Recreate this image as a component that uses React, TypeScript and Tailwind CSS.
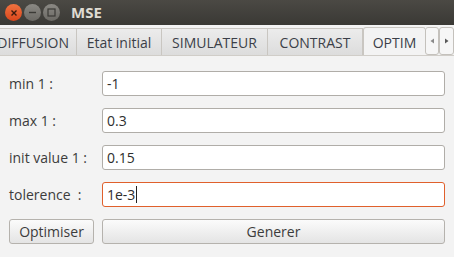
import type { ReactNode } from "react";

const font = { fontFamily: '"Open Sans", "DejaVu Sans", sans-serif' };

const tabs = [
  { label: "Etat initial", width: "w-[85px]" },
  { label: "SIMULATEUR", width: "w-[106px]" },
  { label: "CONTRAST", width: "w-[95px]" },
];

function WindowButton({ children, close }: { children: ReactNode; close?: boolean }) {
  return (
    <div
      className={`flex h-[17px] w-[17px] items-center justify-center rounded-full ${
        close
          ? "bg-gradient-to-b from-[#f0723f] to-[#d9461b] text-[#3a1a0e]"
          : "bg-gradient-to-b from-[#8b8984] to-[#6b6964] text-[#3b3a36]"
      }`}
    >
      {children}
    </div>
  );
}

function Field({ label, value, focused }: { label: string; value: string; focused?: boolean }) {
  return (
    <div className="flex h-[25px] items-center">
      <span className="w-[93px] whitespace-pre text-[14px] text-[#3c3c3c]">{label}</span>
      <div
        className={`flex h-[25px] w-[343px] items-center rounded-[3px] border bg-white px-[4px] text-[14px] text-[#2e2e2e] ${
          focused ? "border-[#e0602c]" : "border-[#b0ada8]"
        }`}
      >
        {value}
        {focused ? <span className="ml-[1px] h-[17px] w-px bg-[#222]" /> : null}
      </div>
    </div>
  );
}

export default function App() {
  return (
    <div className="flex h-[257px] w-[454px] flex-col overflow-hidden bg-[#f3f3f3]" style={font}>
      <div className="flex h-[25px] items-center bg-gradient-to-b from-[#4b4944] to-[#3a3935] pl-[5px]">
        <div className="flex gap-[2px]">
          <WindowButton close>
            <svg width="8" height="8" viewBox="0 0 8 8">
              <path d="M1.5 1.5 6.5 6.5M6.5 1.5 1.5 6.5" stroke="currentColor" strokeWidth="1.4" />
            </svg>
          </WindowButton>
          <WindowButton>
            <svg width="9" height="9" viewBox="0 0 9 9">
              <path d="M1 4.5h7" stroke="currentColor" strokeWidth="1.4" />
            </svg>
          </WindowButton>
          <WindowButton>
            <svg width="9" height="9" viewBox="0 0 9 9">
              <rect x="1" y="1" width="7" height="7" fill="none" stroke="currentColor" strokeWidth="1.2" />
            </svg>
          </WindowButton>
        </div>
        <span className="ml-[11px] text-[15px] font-bold text-[#dfdbd2]">MSE</span>
      </div>

      <div className="flex h-[31px] items-end border-b border-[#d0cdc8] bg-[#f3f3f3]">
        <div className="flex flex-1 items-end overflow-hidden">
          <div className="flex h-[27px] w-[77px] shrink-0 items-center justify-end overflow-hidden whitespace-nowrap border border-b-0 border-l-0 border-[#c9c6c1] bg-gradient-to-b from-[#ececec] to-[#dcdcdc] pr-[7px] text-[14px] text-[#3b3f48]">
            DIFFUSION
          </div>
          {tabs.map((tab) => (
            <div
              key={tab.label}
              className={`flex h-[27px] ${tab.width} shrink-0 items-center justify-center whitespace-nowrap border border-b-0 border-l-0 border-[#c9c6c1] bg-gradient-to-b from-[#ececec] to-[#dcdcdc] text-[14px] text-[#3b3f48]`}
            >
              {tab.label}
            </div>
          ))}
          <div className="-mb-px flex h-[29px] w-[63px] shrink-0 items-center justify-center rounded-t-[3px] border border-b-0 border-[#c9c6c1] bg-[#f3f3f3] text-[14px] text-[#3b3f48]">
            OPTIM
          </div>
        </div>
        <div className="flex h-[28px]">
          <div className="flex w-[14px] items-center justify-center rounded-[3px] border border-[#c4c1bc] bg-[#f6f6f6]">
            <svg width="5" height="6" viewBox="0 0 5 6">
              <path d="M4 0.5 0.5 3 4 5.5Z" fill="#8a8a8a" />
            </svg>
          </div>
          <div className="flex w-[15px] items-center justify-center rounded-[3px] border border-[#c4c1bc] bg-[#f6f6f6]">
            <svg width="5" height="6" viewBox="0 0 5 6">
              <path d="M1 0.5 4.5 3 1 5.5Z" fill="#5a5a5a" />
            </svg>
          </div>
        </div>
      </div>

      <div className="flex flex-col gap-[12px] pl-[9px] pt-[15px]">
        <Field label="min 1 :" value="-1" />
        <Field label="max 1 :" value="0.3" />
        <Field label="init value 1 :" value="0.15" />
        <Field label="tolerence  :" value="1e-3" focused />
        <div className="flex h-[25px] gap-[8px]">
          <button className="w-[85px] rounded-[3px] border border-[#b5b2ad] bg-gradient-to-b from-[#fbfbfb] to-[#e4e4e4] text-[14px] text-[#3c3c3c]">
            Optimiser
          </button>
          <button className="w-[343px] rounded-[3px] border border-[#b5b2ad] bg-gradient-to-b from-[#fbfbfb] to-[#e4e4e4] text-[14px] text-[#3c3c3c]">
            Generer
          </button>
        </div>
      </div>
    </div>
  );
}
